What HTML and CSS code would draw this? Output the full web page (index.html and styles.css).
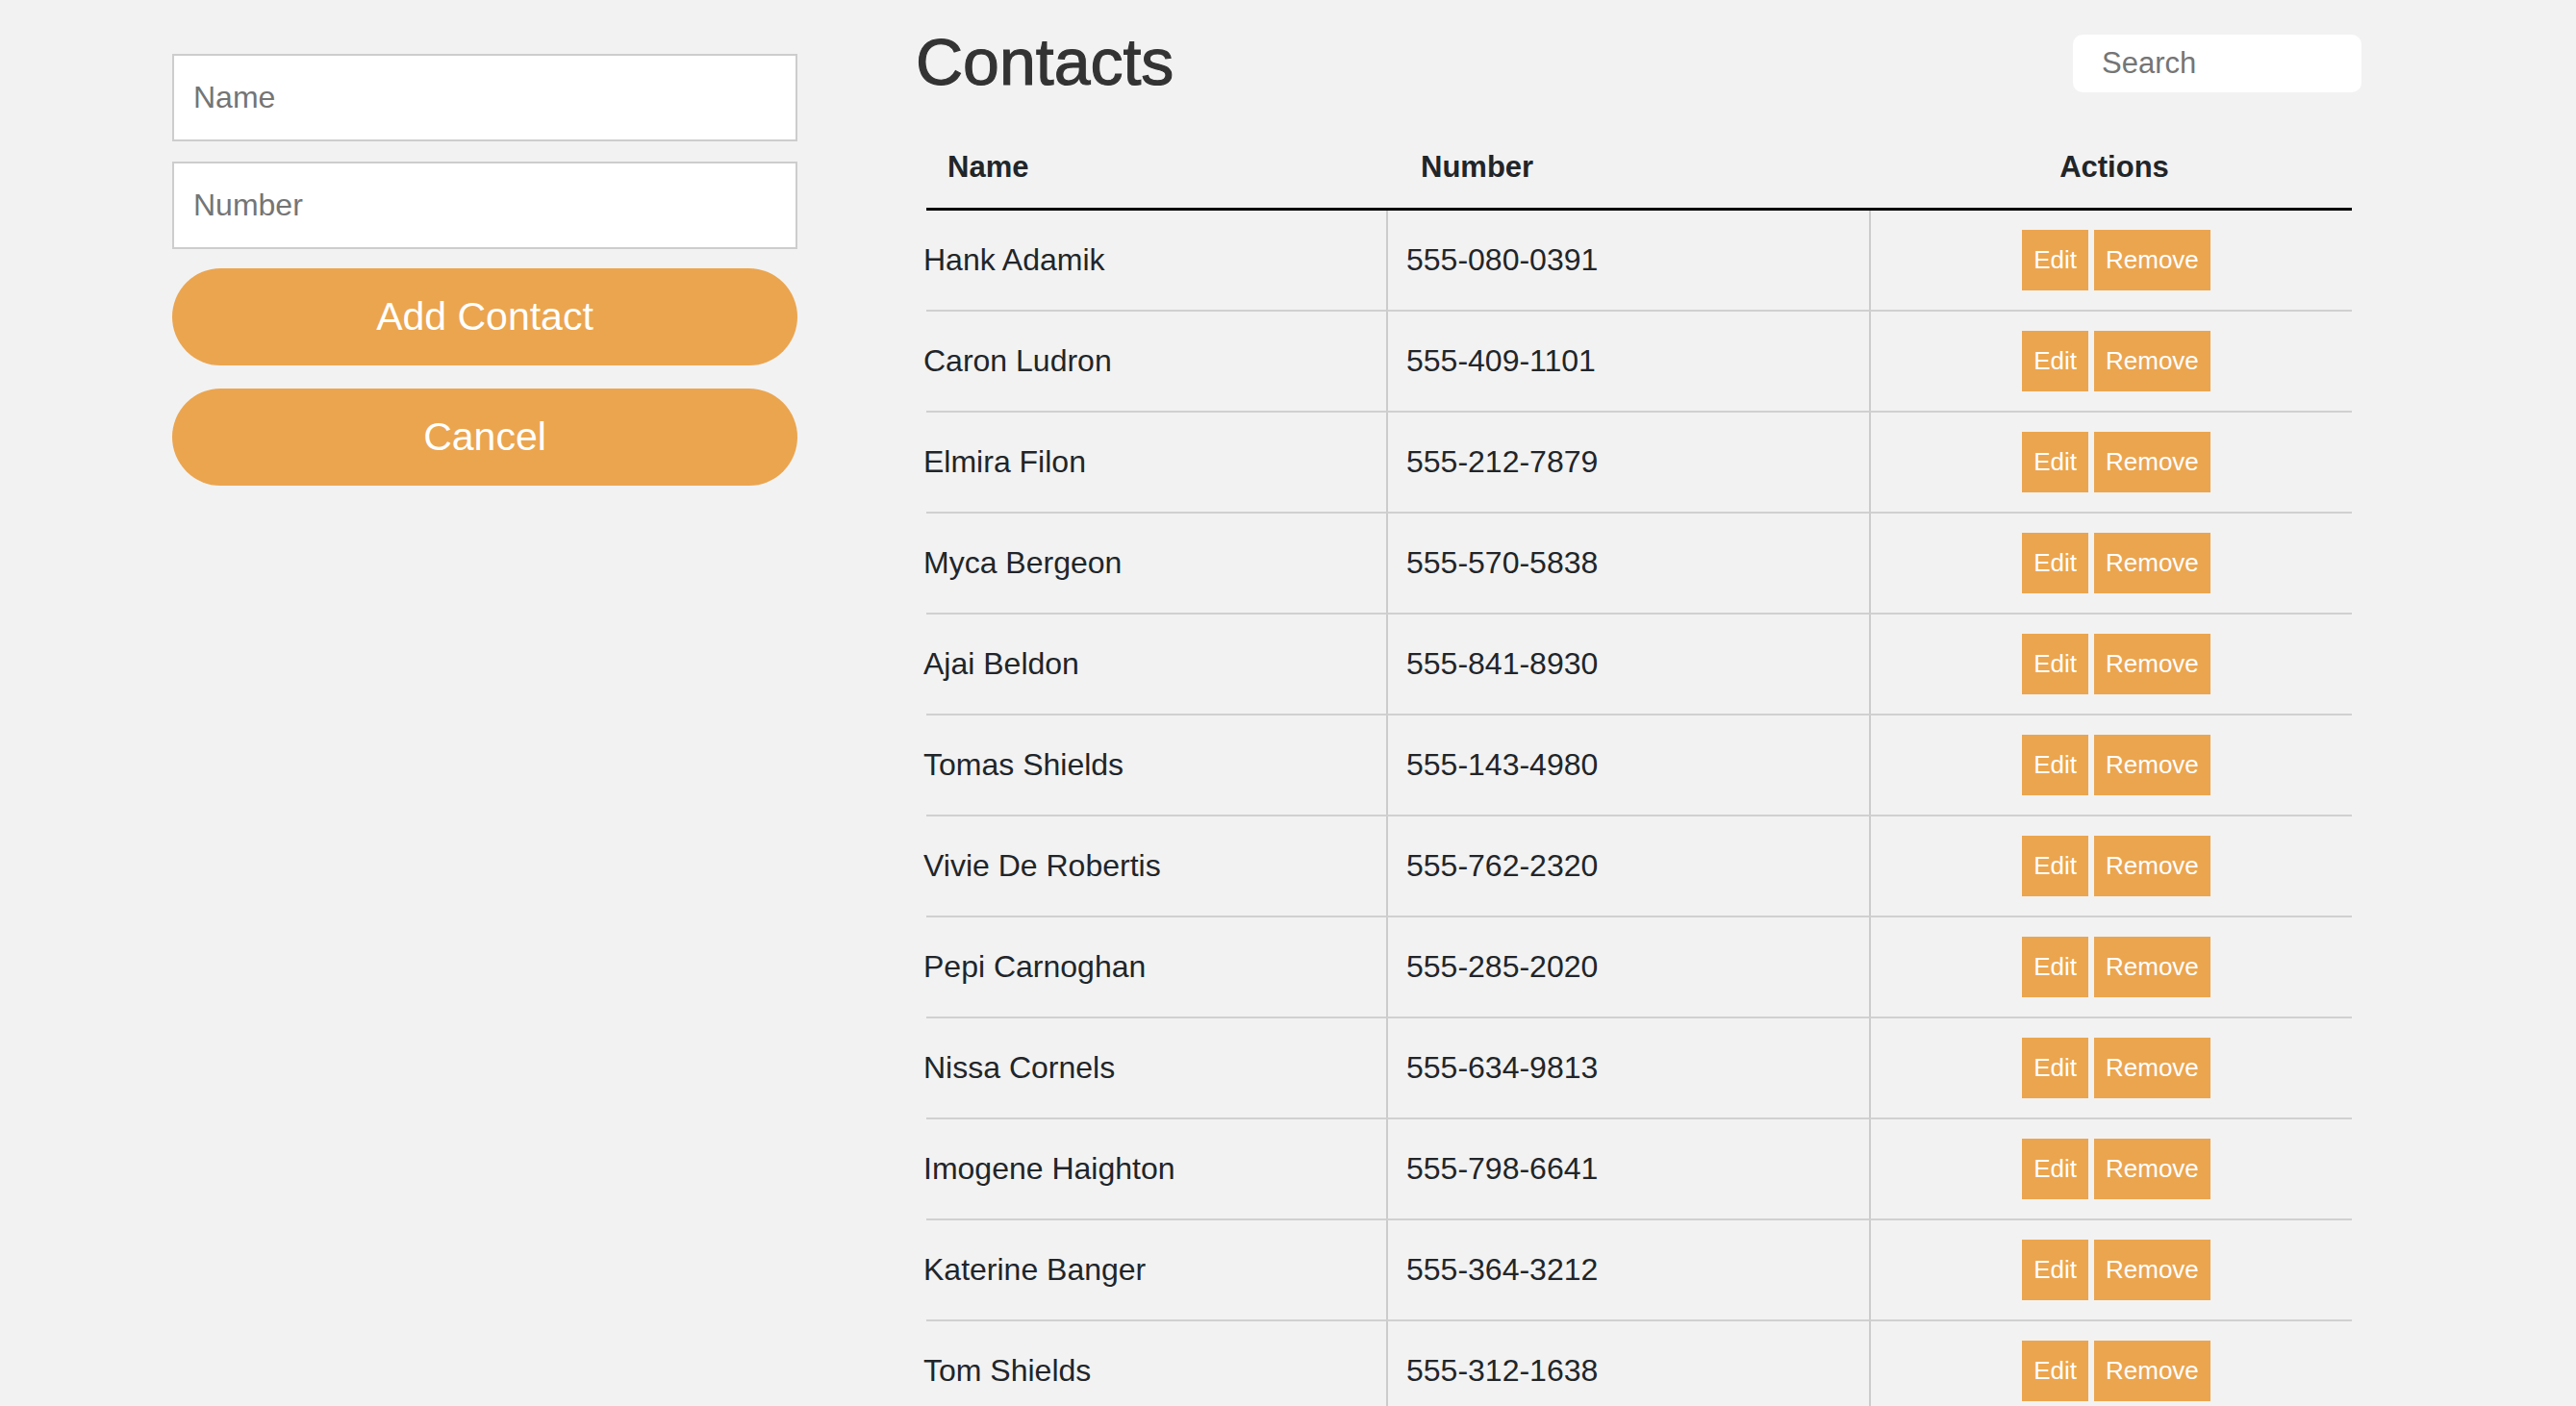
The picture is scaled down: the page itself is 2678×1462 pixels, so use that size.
FILE: index.html
```html
<!DOCTYPE html>
<html lang="en">
<head>
<meta charset="utf-8">
<title>Contacts</title>
<link rel="stylesheet" href="styles.css">
</head>
<body>
<div class="app">
  <form class="form">
    <input class="field" type="text" placeholder="Name">
    <input class="field" type="text" placeholder="Number">
    <button type="button" class="pill pill-add">Add Contact</button>
    <button type="button" class="pill pill-cancel">Cancel</button>
  </form>
  <main class="main">
    <div class="topbar">
      <h1 class="title">Contacts</h1>
      <input class="search" type="text" placeholder="Search">
    </div>
    <table class="contacts">
      <colgroup><col class="c1"><col class="c2"><col class="c3"></colgroup>
      <thead>
        <tr><th class="h-name">Name</th><th class="h-num">Number</th><th class="h-act">Actions</th></tr>
      </thead>
      <tbody>
        <tr><td class="name">Hank Adamik</td><td class="num">555-080-0391</td><td class="act"><span class="acts"><button class="sq">Edit</button><button class="sq">Remove</button></span></td></tr>
        <tr><td class="name">Caron Ludron</td><td class="num">555-409-1101</td><td class="act"><span class="acts"><button class="sq">Edit</button><button class="sq">Remove</button></span></td></tr>
        <tr><td class="name">Elmira Filon</td><td class="num">555-212-7879</td><td class="act"><span class="acts"><button class="sq">Edit</button><button class="sq">Remove</button></span></td></tr>
        <tr><td class="name">Myca Bergeon</td><td class="num">555-570-5838</td><td class="act"><span class="acts"><button class="sq">Edit</button><button class="sq">Remove</button></span></td></tr>
        <tr><td class="name">Ajai Beldon</td><td class="num">555-841-8930</td><td class="act"><span class="acts"><button class="sq">Edit</button><button class="sq">Remove</button></span></td></tr>
        <tr><td class="name">Tomas Shields</td><td class="num">555-143-4980</td><td class="act"><span class="acts"><button class="sq">Edit</button><button class="sq">Remove</button></span></td></tr>
        <tr><td class="name">Vivie De Robertis</td><td class="num">555-762-2320</td><td class="act"><span class="acts"><button class="sq">Edit</button><button class="sq">Remove</button></span></td></tr>
        <tr><td class="name">Pepi Carnoghan</td><td class="num">555-285-2020</td><td class="act"><span class="acts"><button class="sq">Edit</button><button class="sq">Remove</button></span></td></tr>
        <tr><td class="name">Nissa Cornels</td><td class="num">555-634-9813</td><td class="act"><span class="acts"><button class="sq">Edit</button><button class="sq">Remove</button></span></td></tr>
        <tr><td class="name">Imogene Haighton</td><td class="num">555-798-6641</td><td class="act"><span class="acts"><button class="sq">Edit</button><button class="sq">Remove</button></span></td></tr>
        <tr><td class="name">Katerine Banger</td><td class="num">555-364-3212</td><td class="act"><span class="acts"><button class="sq">Edit</button><button class="sq">Remove</button></span></td></tr>
        <tr><td class="name">Tom Shields</td><td class="num">555-312-1638</td><td class="act"><span class="acts"><button class="sq">Edit</button><button class="sq">Remove</button></span></td></tr>
      </tbody>
    </table>
  </main>
</div>
</body>
</html>
```
FILE: styles.css
```css
html, body {
  margin: 0;
  padding: 0;
  background: #f2f2f2;
  font-family: "Liberation Sans", Arial, Helvetica, sans-serif;
  color: #212529;
}

.app {
  display: flex;
  align-items: flex-start;
  padding-left: 179px;
  gap: 123px;
}

/* Left form */
.form {
  width: 650px;
  padding-top: 56px;
  margin: 0;
  display: flex;
  flex-direction: column;
}

.field {
  box-sizing: border-box;
  height: 91px;
  width: 100%;
  margin: 0;
  padding: 0 20px;
  border: 2px solid #cdcdcd;
  border-radius: 0;
  background: #ffffff;
  font-family: "Liberation Sans", Arial, sans-serif;
  font-size: 32px;
  color: #212529;
  outline: none;
}

.field + .field {
  margin-top: 21px;
}

.field::placeholder,
.search::placeholder {
  color: #757575;
  opacity: 1;
}

.pill {
  box-sizing: border-box;
  height: 101px;
  width: 100%;
  border: none;
  border-radius: 51px;
  background: #eba54f;
  color: #ffffff;
  font-family: "Liberation Sans", Arial, sans-serif;
  font-size: 41px;
  padding: 0;
  cursor: pointer;
}

.pill-add {
  margin-top: 20px;
}

.pill-cancel {
  margin-top: 24px;
}

/* Right side */
.main {
  width: 1503px;
  padding-top: 31px;
}

.topbar {
  display: flex;
  justify-content: space-between;
  align-items: flex-start;
}

.title {
  margin: 0;
  font-size: 68px;
  line-height: 67px;
  font-weight: normal;
  color: #333333;
  -webkit-text-stroke: 1.1px #333333;
}

.search {
  box-sizing: border-box;
  width: 300px;
  height: 60px;
  margin-top: 5px;
  padding: 0 30px;
  border: none;
  border-radius: 10px;
  background: #ffffff;
  font-family: "Liberation Sans", Arial, sans-serif;
  font-size: 31px;
  color: #212529;
  outline: none;
}

.contacts {
  width: 1482px;
  margin: 34px 10px 0 11px;
  border-collapse: separate;
  border-spacing: 0;
  table-layout: fixed;
}

.c1 { width: 478px; }
.c2 { width: 502px; }
.c3 { width: 502px; }

.contacts th {
  font-size: 31px;
  line-height: 38px;
  font-weight: bold;
  color: #212529;
  padding: 23px 0;
  border-bottom: 3px solid #000000;
  text-align: left;
}

.contacts th.h-name { padding-left: 22px; }
.contacts th.h-num { padding-left: 36px; }
.contacts th.h-act { text-align: center; padding-left: 8px; }

.contacts td {
  box-sizing: border-box;
  height: 105px;
  padding: 0;
  font-size: 32px;
  color: #212529;
  vertical-align: middle;
  border-bottom: 2px solid #d0d0d0;
  white-space: nowrap;
}

.contacts td.name {
  text-indent: -3px;
}

.contacts td.num {
  padding-left: 19px;
  border-left: 2px solid #cccccc;
}

.contacts td.act {
  text-align: center;
  padding-left: 10px;
  border-left: 2px solid #cccccc;
}

.acts {
  display: inline-flex;
  gap: 6px;
  vertical-align: middle;
}

.sq {
  height: 63px;
  padding: 0 12px;
  border: none;
  border-radius: 0;
  background: #eba54f;
  color: #ffffff;
  font-family: "Liberation Sans", Arial, sans-serif;
  font-size: 26px;
  cursor: pointer;
}
```
